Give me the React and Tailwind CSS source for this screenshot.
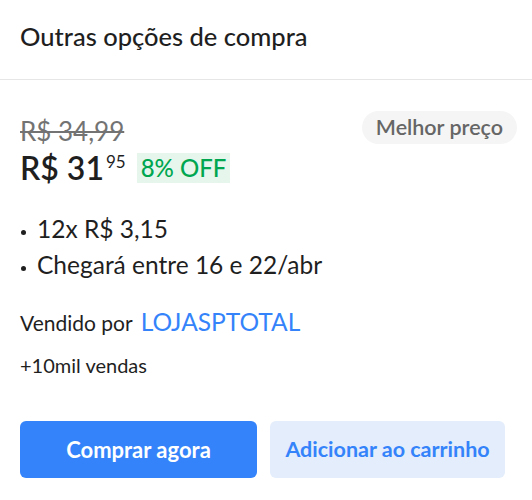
import React from 'react';

function App() {
  return (
    <div className="w-[532px] h-[500px] bg-white font-['Lato','Liberation_Sans',sans-serif] text-[#1f1f1f]">
      <div className="h-[80px] flex items-center px-5 pb-[6px] border-b border-[#e6e6e6]">
        <h2 className="text-[25.5px] font-medium">Outras opções de compra</h2>
      </div>

      <div className="px-5 pt-[36px]">
        <div className="flex items-start justify-between">
          <div>
            <p className="text-[26px] leading-[30px] text-[#737373] line-through decoration-[2px]">R$ 34,99</p>
            <div className="flex items-center mt-[4px] h-[36px]">
              <span className="text-[32px] leading-[36px] font-semibold">R$ 31</span>
              <span className="text-[17px] leading-[17px] self-start ml-[2px] mt-[3px]">95</span>
              <span className="ml-[11px] px-[4px] h-[30px] flex items-center bg-[#e7f6ec] text-[#00a650] text-[24px] font-medium">
                8% OFF
              </span>
            </div>
          </div>
          <span className="mt-[-5px] mr-[-5px] px-[14px] h-[33px] flex items-center rounded-full bg-[#f5f5f5] text-[#666] text-[21.5px] font-semibold">
            Melhor preço
          </span>
        </div>

        <ul className="mt-[28px] space-y-[6px] text-[24.5px] leading-[30px]">
          <li className="flex items-center">
            <span className="w-[5px] h-[5px] rounded-full bg-[#1f1f1f] mt-[6px] mr-[11px] ml-[1px]"></span>
            12x R$ 3,15
          </li>
          <li className="flex items-center">
            <span className="w-[5px] h-[5px] rounded-full bg-[#1f1f1f] mt-[6px] mr-[11px] ml-[1px]"></span>
            Chegará entre 16 e 22/abr
          </li>
        </ul>

        <p className="mt-[27px] h-[30px] text-[21px] leading-[30px] flex items-baseline">
          Vendido por <span className="ml-[8px] text-[24.5px] text-[#3483fa]">LOJASPTOTAL</span>
        </p>
        <p className="mt-[15px] text-[20px] leading-[26px]">+10mil vendas</p>

        <div className="mt-[43px] flex gap-[13px]">
          <button className="w-[237px] h-[57px] rounded-[6px] bg-[#3483fa] text-white text-[22px] font-bold">
            Comprar agora
          </button>
          <button className="w-[235px] h-[57px] rounded-[6px] bg-[#e3edfb] text-[#3483fa] text-[21.5px] font-bold">
            Adicionar ao carrinho
          </button>
        </div>
      </div>
    </div>
  );
}

export default App;
